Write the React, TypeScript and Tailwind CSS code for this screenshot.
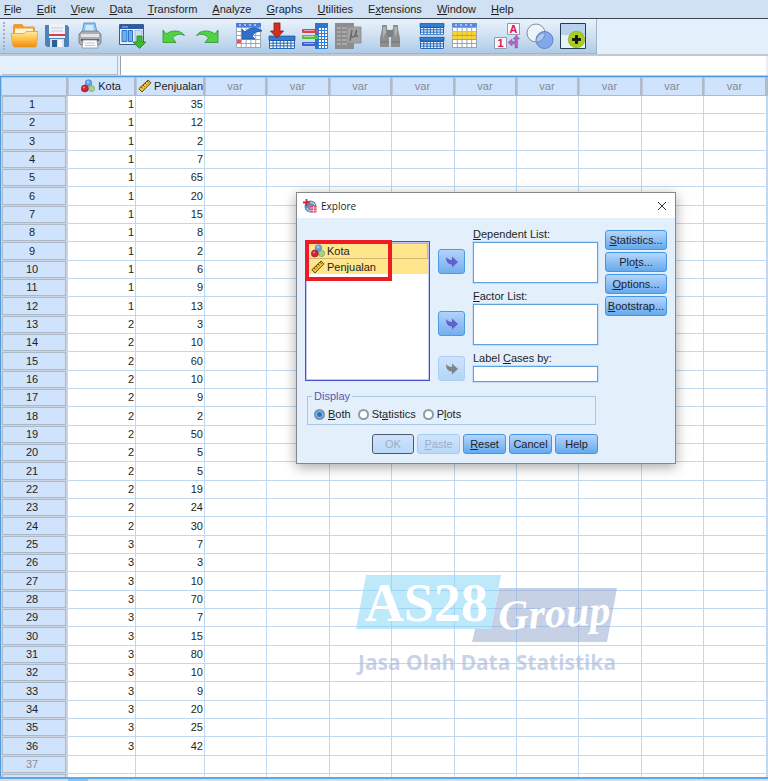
import React from "react";

const MENUS: [string, string, string][] = [
  ["", "F", "ile"],
  ["", "E", "dit"],
  ["", "V", "iew"],
  ["", "D", "ata"],
  ["", "T", "ransform"],
  ["", "A", "nalyze"],
  ["", "G", "raphs"],
  ["", "U", "tilities"],
  ["E", "x", "tensions"],
  ["", "W", "indow"],
  ["", "H", "elp"],
];

const SALES = [
  35, 12, 2, 7, 65, 20, 15, 8, 2, 6, 9, 13, 3, 10, 60, 10, 9, 2, 50, 5, 5, 19,
  24, 30, 7, 3, 10, 70, 7, 15, 80, 10, 9, 20, 25, 42,
];

const ROWS = Array.from({ length: 38 }, (_, i) => ({
  n: i + 1,
  label: i < 37 ? String(i + 1) : "",
  kota: i < 36 ? Math.floor(i / 12) + 1 : null,
  penjualan: i < 36 ? SALES[i] : null,
}));

const VAR_COLS = [
  "w-[62px]",
  "w-[63px]",
  "w-[62px]",
  "w-[63px]",
  "w-[62px]",
  "w-[62px]",
  "w-[63px]",
  "w-[62px]",
  "w-[63px]",
];

function Mnemonic({ parts }: { parts: [string, string, string] }) {
  return (
    <span>
      {parts[0]}
      <span className="underline underline-offset-1">{parts[1]}</span>
      {parts[2]}
    </span>
  );
}

function Svg({ children }: { children: React.ReactNode }) {
  return (
    <svg viewBox="0 0 28 28" className="size-7" aria-hidden="true">
      {children}
    </svg>
  );
}

function GridLines({
  x,
  y,
  w,
  h,
  cols,
  rows,
  color,
}: {
  x: number;
  y: number;
  w: number;
  h: number;
  cols: number;
  rows: number;
  color: string;
}) {
  let d = "";
  for (let i = 0; i <= cols; i++) d += `M${x + (w * i) / cols} ${y}v${h}`;
  for (let i = 0; i <= rows; i++) d += `M${x} ${y + (h * i) / rows}h${w}`;
  return <path d={d} stroke={color} strokeWidth="1" fill="none" />;
}

function FolderIcon() {
  return (
    <Svg>
      <defs>
        <linearGradient id="folder" x1="0" y1="0" x2="0" y2="1">
          <stop offset="0" stopColor="#ffe9a0" />
          <stop offset="0.5" stopColor="#ffc14a" />
          <stop offset="1" stopColor="#f08a10" />
        </linearGradient>
      </defs>
      <path d="M3 23V4l1-2h8l2 2.500h10l1 2v14z" fill="#f09a30" />
      <path d="M5 6.500h18v8H5z" fill="#fff4d0" />
      <path d="M1 11.500h13l2-2h12l-1.500 14-1 1.500H4l-1-1.500z" fill="url(#folder)" stroke="#ee9a26" strokeWidth="0.800" />
    </Svg>
  );
}

function SaveIcon() {
  return (
    <Svg>
      <path d="M2 3h22l2 2v19l-1 1H4l-2-2z" fill="#4f82b8" />
      <path d="M6 2h16v14H6z" fill="#eef1f6" />
      <path d="M6 12h16v2H6z" fill="#d83a58" />
      <path d="M8 6h12M8 9h12" stroke="#c7ccd6" />
      <path d="M7 17h14v8H7z" fill="#d7e2ee" />
      <path d="M9 18h5v7H9z" fill="#2f6095" />
      <path d="M15 18h4v7h-4z" fill="#f8fafc" />
    </Svg>
  );
}

function PrinterIcon() {
  return (
    <Svg>
      <path d="M8 1h11l2 10H6z" fill="#8fc9f4" stroke="#4a86c5" strokeWidth="0.800" />
      <path d="M10 3h7l1 6H9z" fill="#cfeaff" />
      <path d="M3 12l3-3h16l3 3v9l-2 2H5l-2-2z" fill="#a9acb1" stroke="#76797f" strokeWidth="0.800" />
      <path d="M5 12h18v3H5z" fill="#e3e5e8" />
      <path d="M5 17h18v2H5z" fill="#54575c" />
      <path d="M7 18h14l1 8H6z" fill="#fafcff" stroke="#8c9098" strokeWidth="0.800" />
      <path d="M9 21h10M9 23.500h10" stroke="#b0c6dc" />
    </Svg>
  );
}

function RecallIcon() {
  return (
    <Svg>
      <path d="M1.500 2.500h24v20h-24z" fill="#e9eff6" stroke="#3c5f92" />
      <path d="M2 3h23v4H2z" fill="#2a5aa8" />
      <path d="M4 5h6" stroke="#9bc0ee" />
      <path d="M4 8.500h5v11H4zM10.500 8.500h4v11h-4z" fill="#66b2f0" stroke="#2b74c6" />
      <path d="M17 8.500h7v12h-7z" fill="#cfdded" stroke="#8aa2c0" strokeWidth="0.600" />
      <path d="M19 14h5v6h4l-6.500 6.500-6.500-6.500h4z" fill="#3cb92c" stroke="#1b8a1e" strokeWidth="0.800" />
    </Svg>
  );
}

function UndoIcon() {
  return (
    <Svg>
      <path d="M3 8l3 4C12 7.500 21 8 24.500 13.500c-4-2-9-1.500-12 2.500l3.500 4.500H3z" fill="#55cf45" stroke="#27962a" strokeWidth="0.800" />
    </Svg>
  );
}

function RedoIcon() {
  return (
    <Svg>
      <path d="M25 8l-3 4C16 7.500 7 8 3.500 13.500c4-2 9-1.500 12 2.500L12 20.500h13z" fill="#55cf45" stroke="#27962a" strokeWidth="0.800" />
    </Svg>
  );
}

function GotoCaseIcon() {
  return (
    <Svg>
      <path d="M1 1h24v25H1z" fill="#fff" />
      <GridLines x={1.5} y={5.5} w={24} h={20} cols={5} rows={5} color="#9aa5b8" />
      <path d="M1 1h25v4H1z" fill="#4a7cda" />
      <path d="M4 3h2M9 3h2M14 3h2M19 3h2" stroke="#fff" />
      <path d="M2 18h4v3H2z" fill="#f0525c" />
      <path d="M7 7l3 3C14 5 22 4 27 9c-5 0-8 2-10 5l3 3H7z" fill="#2f6fce" stroke="#1c4ea0" strokeWidth="0.700" />
    </Svg>
  );
}

function GotoVarIcon() {
  return (
    <Svg>
      <path d="M1 14h26v13H1z" fill="#fff" />
      <GridLines x={1.5} y={18.5} w={25} h={8} cols={7} rows={3} color="#2468ba" />
      <path d="M1 14h26v4.500H1z" fill="#2f7ed2" stroke="#1b4f94" strokeWidth="0.700" />
      <path d="M6 1h6v8h3.500L9 16 2.500 9H6z" fill="#d02f22" stroke="#93180f" strokeWidth="0.800" />
    </Svg>
  );
}

function VariablesIcon() {
  return (
    <Svg>
      <path d="M14 1h13v26H14z" fill="#fff" />
      <GridLines x={14.500} y={5.500} w={12} h={21} cols={4} rows={7} color="#2f7fd2" />
      <path d="M14 1h13v5H14zM14 6h3v21h-3z" fill="#2a78ce" />
      <rect x="1" y="7" width="16" height="4" rx="1" fill="#d8405c" />
      <rect x="1" y="13" width="16" height="4" rx="1" fill="#56c336" />
      <rect x="1" y="20" width="16" height="4" rx="1" fill="#4460cf" />
      <path d="M3 8.500h10M3 14.500h10M3 21.500h10" stroke="#fff" strokeOpacity="0.500" />
    </Svg>
  );
}

function StatsIcon() {
  return (
    <Svg>
      <path d="M1 1h19v26H1z" fill="#8d8d8d" />
      <path d="M3 5h4v2H3zM8 5h5v2H8zM3 9h4v2H3zM8 9h5v2H8zM3 13h4v2H3zM8 13h5v2H8zM3 17h4v2H3zM8 17h5v2H8zM3 21h4v2H3zM8 21h5v2H8z" fill="#a8a8a8" />
      <path d="M13 5h14v16H13z" fill="#a2a2a2" stroke="#919191" />
      <path d="M18 8l-2 11M17.500 14c2 2.500 4 0 5-6-1 5-1 7 1.500 6" fill="none" stroke="#686868" strokeWidth="1.500" />
    </Svg>
  );
}

function FindIcon() {
  return (
    <Svg>
      <path d="M6 3h5v4l2 2v16H4V16l2-9zM17 3h5v4l2 9v9h-9V9l2-2z" fill="#8e8e8e" />
      <path d="M11 8h6v7h-6z" fill="#808080" />
      <path d="M7 5h3v5l-3 6zM18 5h3v5l-2 6z" fill="#b2b2b2" />
      <path d="M4 20h9M15 20h9" stroke="#747474" />
    </Svg>
  );
}

function SplitIcon() {
  return (
    <Svg>
      <path d="M2 2h24v25H2z" fill="#fff" />
      <GridLines x={2.5} y={5.5} w={23} h={7} cols={7} rows={3} color="#2468ba" />
      <GridLines x={2.5} y={19.5} w={23} h={7} cols={7} rows={3} color="#2468ba" />
      <path d="M2 1.500h24v4H2zM2 15h24v4H2z" fill="#2f7ed2" stroke="#1b4f94" strokeWidth="0.700" />
      <path d="M1 13.500h26" stroke="#c4daf0" strokeWidth="1.500" />
    </Svg>
  );
}

function SelectIcon() {
  return (
    <Svg>
      <path d="M1 1h24v25H1z" fill="#fff" />
      <path d="M1 9h24v9H1z" fill="#fbd52c" />
      <GridLines x={1.5} y={5.5} w={24} h={20} cols={5} rows={5} color="#98a2b0" />
      <path d="M1 9h24v3H1zM1 14h24v3H1z" fill="#fbd52c" fillOpacity="0.600" />
      <path d="M1 1h25v4H1z" fill="#5a8ae0" />
      <path d="M4 3h2M9 3h2M14 3h2M19 3h2" stroke="#fff" />
    </Svg>
  );
}

function LabelsIcon() {
  return (
    <Svg>
      <path d="M14.500 1.500h12v11h-12zM1.500 15.500h12v11h-12z" fill="#f6f8fb" stroke="#8e9cac" />
      <text x="20.500" y="11" textAnchor="middle" className="font-['Liberation_Sans',Arial,sans-serif] text-[11px] font-bold" fill="#df1455">A</text>
      <text x="7.500" y="25" textAnchor="middle" className="font-['Liberation_Sans',Arial,sans-serif] text-[11px] font-bold" fill="#df1455">1</text>
      <path d="M23.500 13l3 4h-2v9h-2.500v-4H19v2l-4-3.500 4-3.500v2.500h3V17h-2z" fill="#b068c0" stroke="#93489f" strokeWidth="0.500" />
    </Svg>
  );
}

function SetsIcon() {
  return (
    <Svg>
      <circle cx="10" cy="11" r="9" fill="#f3f6fa" fillOpacity="0.800" stroke="#868d98" />
      <circle cx="18.500" cy="18" r="8.500" fill="#6f9deb" fillOpacity="0.800" stroke="#5b82c6" />
      <path d="M10 20a9 9 0 0 0 9-9 8.500 8.500 0 0 0-9 9z" fill="#b4c9ea" stroke="#7389ad" strokeWidth="0.700" />
    </Svg>
  );
}

function PlusIcon() {
  return (
    <Svg>
      <path d="M1.500 1.500h25v25h-25z" fill="#e8f2fb" stroke="#283a4d" />
      <path d="M2 2h24v11H2z" fill="#b6d2ec" />
      <circle cx="17.500" cy="17.500" r="8.300" fill="#a9cc1f" stroke="#86a60e" strokeWidth="0.600" />
      <path d="M16.500 13.500h2v3h3v2h-3v3h-2v-3h-3v-2h3z" fill="#161a10" stroke="#161a10" />
    </Svg>
  );
}

const TOOL_GROUPS: [string, () => React.ReactElement][][] = [
  [
    ["Open", FolderIcon],
    ["Save", SaveIcon],
    ["Print", PrinterIcon],
  ],
  [["Recall dialogs", RecallIcon]],
  [
    ["Undo", UndoIcon],
    ["Redo", RedoIcon],
  ],
  [
    ["Go to case", GotoCaseIcon],
    ["Go to variable", GotoVarIcon],
    ["Variables", VariablesIcon],
    ["Run statistics", StatsIcon],
  ],
  [["Find", FindIcon]],
  [
    ["Split file", SplitIcon],
    ["Select cases", SelectIcon],
  ],
  [
    ["Value labels", LabelsIcon],
    ["Use variable sets", SetsIcon],
    ["Customize toolbar", PlusIcon],
  ],
];

function NominalIcon() {
  return (
    <svg viewBox="0 0 14 14" className="size-3.5 shrink-0" aria-hidden="true">
      <circle cx="7.500" cy="4" r="3.300" fill="#6aa5e6" stroke="#3d79bd" strokeWidth="0.600" />
      <circle cx="10.500" cy="9.500" r="3.100" fill="#a5d38c" stroke="#5b9b48" strokeWidth="0.600" />
      <circle cx="3.800" cy="9.500" r="3.500" fill="#d02438" stroke="#951224" strokeWidth="0.600" />
      <circle cx="3" cy="8.500" r="1" fill="#f08b95" />
      <circle cx="7" cy="3" r="1" fill="#b7d7fa" />
    </svg>
  );
}

function ScaleIcon() {
  return (
    <svg viewBox="0 0 14 14" className="size-3.5 shrink-0" aria-hidden="true">
      <path d="M0.800 9.800L10 1l3 2.800L4 13z" fill="#f0c133" stroke="#55420b" strokeWidth="0.900" />
      <path d="M3 7.800l1.500 1.500M5 6l1.500 1.500M7 4l1.500 1.500M9 2.200l1.500 1.500" stroke="#4a3a08" strokeWidth="0.900" />
    </svg>
  );
}

function MoveButton({ label, disabled }: { label: string; disabled?: boolean }) {
  return (
    <button
      type="button"
      aria-label={label}
      disabled={disabled}
      className="flex h-[25px] w-[27px] items-center justify-center rounded-[3px] border border-[#4c9ae4] bg-linear-to-b from-[#b3d3fa] to-[#72aeee] disabled:border-[#a9d0f4] disabled:from-[#cfe3fb] disabled:to-[#b2d5f6]"
    >
      <svg viewBox="0 0 14 12" className="h-3 w-3.5" aria-hidden="true">
        <path
          d="M1 1c1.500 2 3.500 3 6 3V0.500L13 6 7 11.500V8.500C3.500 8.500 1 6.500 1 1z"
          fill={disabled ? "#7f8489" : "#6260cc"}
        />
      </svg>
    </button>
  );
}

function DialogButton({
  parts,
  disabled,
  size,
  tone = "border-[#4296e4] disabled:border-[#a2cdf4]",
}: {
  parts: [string, string, string];
  disabled?: boolean;
  size: string;
  tone?: string;
}) {
  return (
    <button
      type="button"
      disabled={disabled}
      className={`flex h-5 items-center justify-center rounded-[3px] border bg-linear-to-b from-[#b5d5fb] to-[#65a9ec] text-[#1c222c] disabled:from-[#cfe3fb] disabled:to-[#b8d9f8] disabled:text-[#9bafc6] ${size} ${tone}`}
    >
      {parts[1] ? <Mnemonic parts={parts} /> : parts[0]}
    </button>
  );
}

function Radio({ parts, checked }: { parts: [string, string, string]; checked?: boolean }) {
  return (
    <label className="flex items-center gap-[3px]">
      <input
        type="radio"
        name="display"
        defaultChecked={checked}
        className="size-[11px] appearance-none rounded-full border-2 border-[#8c9ba6] bg-white checked:border-[#7f93a5] checked:bg-[#1d73cf] checked:shadow-[inset_0_0_0_1px_#9cc8f2]"
      />
      <Mnemonic parts={parts} />
    </label>
  );
}

const FIELD =
  "block w-full resize-none border border-[#5fa0de] bg-white shadow-[0_0_0_1px_#c5def6] outline-none";

function ExploreDialog() {
  return (
    <section
      role="dialog"
      aria-label="Explore"
      className="absolute top-[192px] left-[296px] w-[380px] border border-[#85898f] bg-[#e3effb] shadow-[0_3px_12px_rgba(0,0,0,0.35)]"
    >
      <header className="flex h-[25px] items-center bg-white pr-2 pl-1.5">
        <svg viewBox="0 0 14 14" className="size-3.5" aria-hidden="true">
          <circle cx="7.500" cy="7.500" r="6" fill="#5d91bf" />
          <path d="M4 5c2-2 6-2 8 1M4 9c1 2 2 3 4 4" stroke="#d7e8f6" fill="none" />
          <path d="M3.500 0v7M0 3.500h7" stroke="#d02242" strokeWidth="1.800" />
          <path d="M7 6.500h6.500v7H7z" fill="#da5468" />
          <path d="M7 9h6.500M7 11.500h6.500M10.500 7v6" stroke="#fff" strokeWidth="0.600" />
        </svg>
        <h2 className="ml-1 flex-1 font-['Open_Sans','Noto_Sans',sans-serif] text-[10px]">Explore</h2>
        <button type="button" aria-label="Close" className="flex size-2.5 items-center justify-center">
          <svg viewBox="0 0 10 10" className="size-2.5" aria-hidden="true">
            <path d="M1 1l8 8M9 1L1 9" stroke="#333" strokeWidth="1" />
          </svg>
        </button>
      </header>
      <div className="flex pt-2.5 pr-2 pl-2">
        <ul
          role="listbox"
          aria-label="Variables"
          className="mt-[13px] h-[140px] w-[125px] border border-[#4a50c8] bg-white p-px shadow-[inset_0_0_0_1px_#c4c6f4]"
        >
          <li role="option" aria-selected="true" className="flex h-4 items-center gap-0.5 border border-[#cdb873] bg-[#ffe68c] pl-[3px]">
            <NominalIcon />
            Kota
          </li>
          <li role="option" aria-selected="true" className="flex h-[15px] items-center gap-0.5 bg-[#ffe68c] pl-1">
            <ScaleIcon />
            Penjualan
          </li>
        </ul>
        <div className="ml-2 flex flex-col pt-[21px]">
          <MoveButton label="Move to dependent list" />
          <div className="h-[37px]" />
          <MoveButton label="Move to factor list" />
          <div className="h-5" />
          <MoveButton label="Move to label cases by" disabled />
        </div>
        <div className="ml-2 w-[125px]">
          <label htmlFor="dependent" className="block h-3.5 leading-[12px]">
            <Mnemonic parts={["", "D", "ependent List:"]} />
          </label>
          <textarea id="dependent" className={`h-[41px] ${FIELD}`} />
          <label htmlFor="factor" className="mt-[7px] block h-3.5 leading-[12px]">
            <Mnemonic parts={["", "F", "actor List:"]} />
          </label>
          <textarea id="factor" className={`h-[41px] ${FIELD}`} />
          <label htmlFor="cases" className="mt-[7px] block h-3.5 leading-[12px]">
            <Mnemonic parts={["Label ", "C", "ases by:"]} />
          </label>
          <input id="cases" type="text" className={`h-4 ${FIELD}`} />
        </div>
        <div className="ml-[7px] flex flex-1 flex-col gap-0.5 pt-0.5">
          <DialogButton parts={["", "S", "tatistics..."]} size="w-full" />
          <DialogButton parts={["Plo", "t", "s..."]} size="w-full" />
          <DialogButton parts={["", "O", "ptions..."]} size="w-full" />
          <DialogButton parts={["", "B", "ootstrap..."]} size="w-full" />
        </div>
      </div>
      <fieldset className="mt-[7px] mr-[79px] ml-[10px] h-9 border border-[#a9c7e6] px-1.5">
        <legend className="-ml-0.5 px-0.5 leading-[14px] text-[#5558b0]">Display</legend>
        <div className="mt-1 flex gap-[7px] leading-[14px]">
          <Radio parts={["", "B", "oth"]} checked />
          <Radio parts={["St", "a", "tistics"]} />
          <Radio parts={["P", "l", "ots"]} />
        </div>
      </fieldset>
      <footer className="mt-[9px] mr-[77px] mb-[9px] flex justify-end gap-[3px]">
        <DialogButton parts={["OK", "", ""]} size="w-[42px]" disabled tone="border-[#4a5a6a]" />
        <DialogButton parts={["", "P", "aste"]} size="w-[43px]" disabled />
        <DialogButton parts={["", "R", "eset"]} size="w-[43px]" />
        <DialogButton parts={["Cancel", "", ""]} size="w-[43px]" />
        <DialogButton parts={["Help", "", ""]} size="w-[43px]" />
      </footer>
    </section>
  );
}

function Watermark() {
  return (
    <svg
      viewBox="0 0 270 105"
      className="pointer-events-none absolute top-[573px] left-[354px] h-[105px] w-[270px]"
      role="img"
      aria-label="AS28 Group"
    >
      <path d="M145 15h118l-10 54H118l3-13h16z" fill="#8da4cd" fillOpacity="0.500" />
      <path d="M12 2h135l-10 54H2z" fill="#7dd4f6" fillOpacity="0.500" />
      <text x="11" y="48" fill="#fff" className="font-['Liberation_Serif',serif] text-[54px] font-bold">
        AS28
      </text>
      <text x="145" y="57" transform="rotate(-3 145 57)" fill="#fff" className="font-['Liberation_Serif',serif] text-[42px] font-bold italic">
        Group
      </text>
      <text x="4" y="97" fill="#a2b6d8" fillOpacity="0.600" className="font-['Noto_Sans',sans-serif] text-[21px] font-bold">
        Jasa Olah Data Statistika
      </text>
    </svg>
  );
}

const HEAD = "h-[19px] border-r-2 border-b border-[#b0bac8] bg-[#d0e3fc] p-0 font-normal shadow-[inset_1px_1px_0_#b9c9dd]";
const CELL = "border-r border-b border-[#bfd9f1] p-0 pr-px pb-px text-right";

export default function App() {
  return (
    <div className="relative flex h-screen flex-col overflow-hidden bg-[#e3effb] font-['Liberation_Sans',Arial,sans-serif] text-[11px] leading-[14px] text-[#1d1f24]">
      <nav className="flex h-[19px] shrink-0 items-center gap-[15px] border-b border-[#3d4650] bg-[#cfe1f3] pl-1">
        {MENUS.map((m) => (
          <button type="button" key={m.join("")}>
            <Mnemonic parts={m} />
          </button>
        ))}
      </nav>
      <div className="flex h-[35px] shrink-0">
        <div className="flex items-center gap-3.5 border-r border-b border-[#9fb4c8] bg-linear-to-b from-[#e9f2fb] via-[#cfe1f3] to-[#adcbe7] pr-[9px]">
          {TOOL_GROUPS.map((group, i) => (
            <div key={i} className="flex gap-[5px] first:border-l-2 first:border-dotted first:border-[#a3b2c3] first:pl-[5px] first:ml-[3px]">
              {group.map(([name, Icon]) => (
                <button type="button" key={name} aria-label={name}>
                  <Icon />
                </button>
              ))}
            </div>
          ))}
        </div>
      </div>
      <div className="flex h-[22px] shrink-0 border-t-2 border-b border-[#c3c9d0] px-0.5">
        <div className="w-[116px] border-r border-b border-[#b5bec8]" />
        <div className="ml-0.5 flex-1 border-l border-[#9aa2ab] bg-white" />
      </div>
      <div className="min-h-0 flex-1 overflow-hidden border-t border-l border-[#4f9be0] bg-white">
        <table className="w-full table-fixed border-separate border-spacing-0">
          <colgroup>
            <col className="w-[67px]" />
            <col className="w-[68px]" />
            <col className="w-[69px]" />
            {VAR_COLS.map((w, i) => (
              <col key={i} className={w} />
            ))}
            <col />
          </colgroup>
          <thead>
            <tr>
              <td className={HEAD} />
              <th className={HEAD}>
                <span className="flex items-center justify-center gap-[3px]">
                  <NominalIcon />
                  Kota
                </span>
              </th>
              <th className={HEAD}>
                <span className="flex items-center justify-end gap-0.5">
                  <ScaleIcon />
                  Penjualan
                </span>
              </th>
              {VAR_COLS.map((_, i) => (
                <th key={i} className={`${HEAD} text-[#84898f]`}>
                  var
                </th>
              ))}
              <td className={HEAD} />
            </tr>
          </thead>
          <tbody>
            {ROWS.map((r) => (
              <tr key={r.n} className="h-[18px] nth-[3n]:h-[19px]">
                <th
                  className={`border-r-2 border-b border-l border-[#ccd5df] bg-[#d0e3fc] p-0 pr-1 pb-px font-normal shadow-[inset_0_0_0_1px_#aeb9c8] ${
                    r.kota === null ? "text-[#8a8f95]" : ""
                  }`}
                >
                  {r.label}
                </th>
                <td className={CELL}>{r.kota}</td>
                <td className={CELL}>{r.penjualan}</td>
                {VAR_COLS.map((_, i) => (
                  <td key={i} className={CELL} />
                ))}
                <td className={CELL} />
              </tr>
            ))}
          </tbody>
        </table>
      </div>
      <div className="flex h-1 shrink-0 border-t-2 border-[#62a6e2] bg-[#d9dce2] pl-[68px]">
        <div className="w-5 bg-[#8fc0f0]" />
      </div>
      <Watermark />
      <ExploreDialog />
      <div className="pointer-events-none absolute top-[240px] left-[305px] h-[41px] w-[87px] border-4 border-[#ed1c24]" />
    </div>
  );
}
